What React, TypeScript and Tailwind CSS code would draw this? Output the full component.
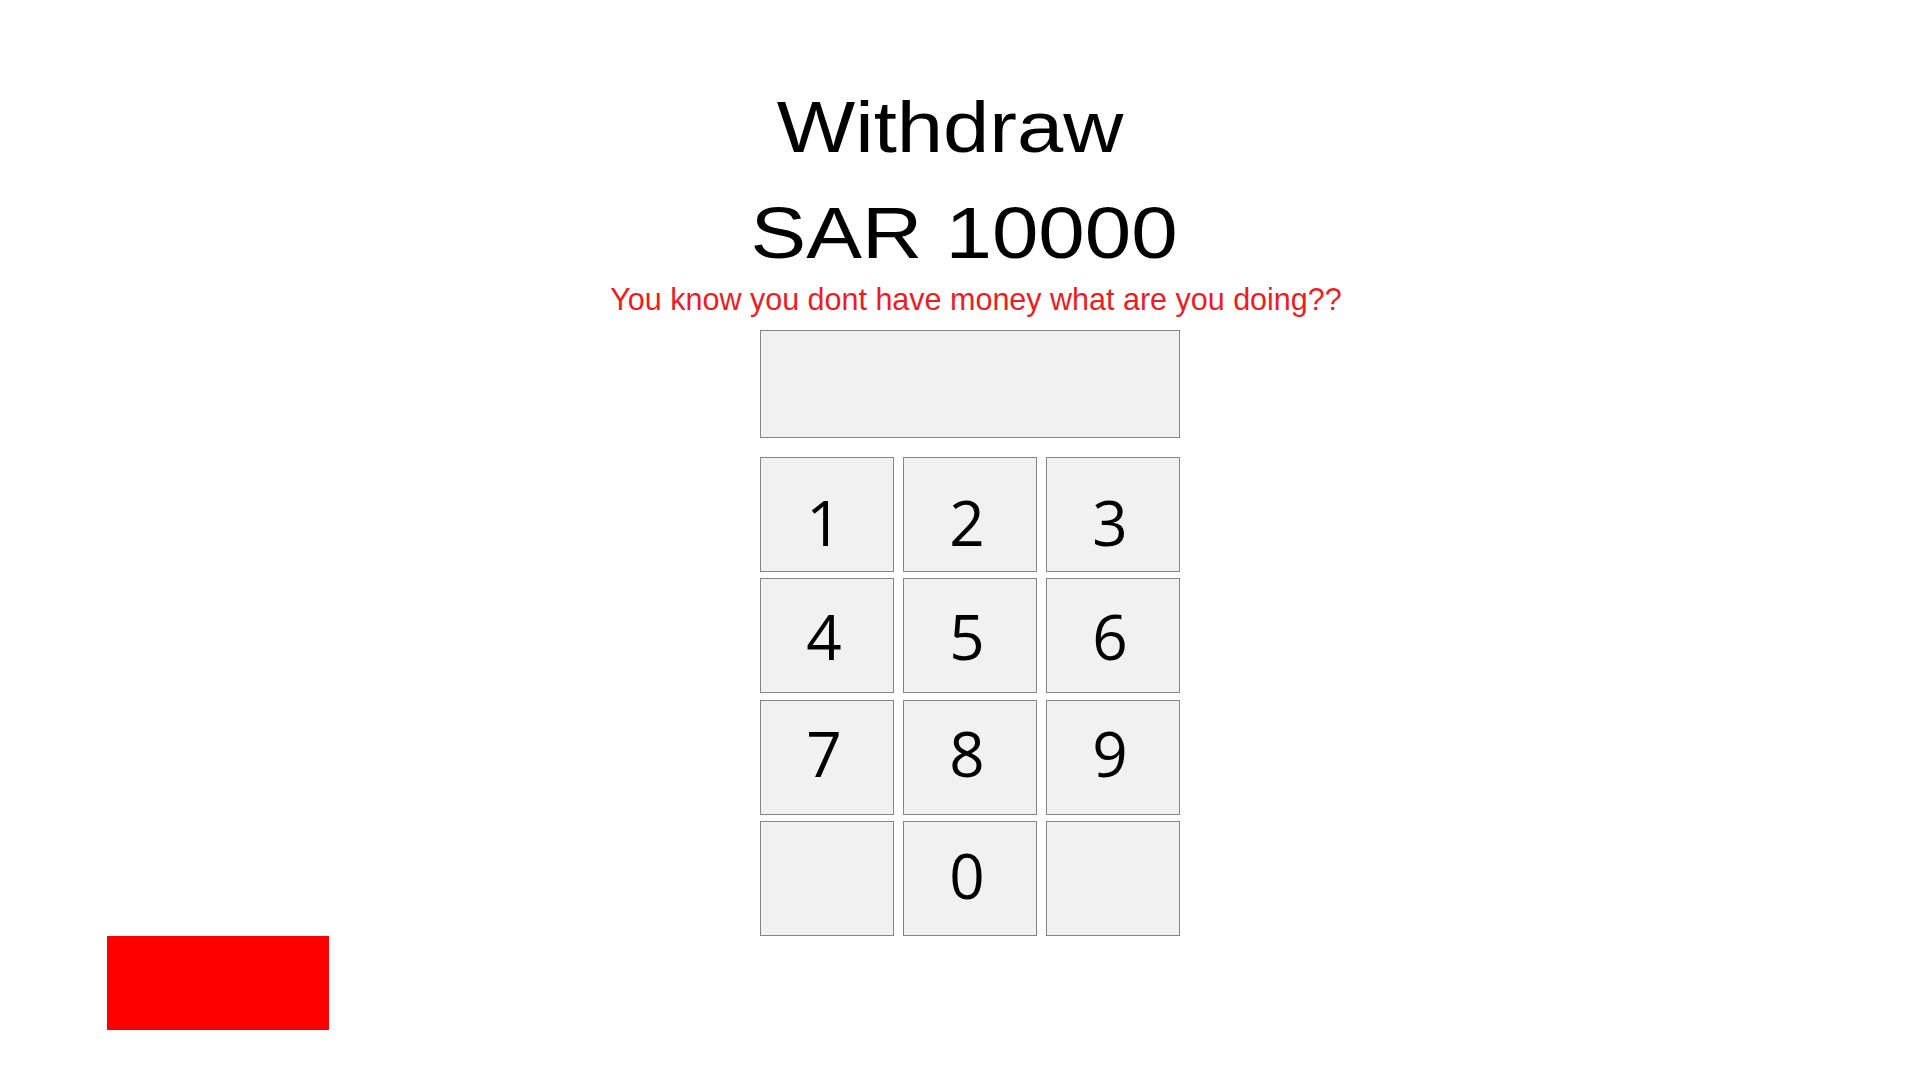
const rows = [
  { keys: ["1", "2", "3"], pad: "pt-[16px]" },
  { keys: ["4", "5", "6"], pad: "pt-0" },
  { keys: ["7", "8", "9"], pad: "pb-[8px]" },
  { keys: ["", "0", ""], pad: "pb-[8px]" },
];

function Key({ label, pad }: { label: string; pad: string }) {
  return (
    <button
      type="button"
      className={`flex h-[115px] items-center justify-center border border-[#858585] bg-[#f1f1f1] pr-[6px] text-[62px] leading-none text-black ${pad}`}
      style={{ fontFamily: '"Open Sans", "Noto Sans", sans-serif' }}
    >
      {label}
    </button>
  );
}

export default function App() {
  return (
    <div
      className="flex min-h-[1080px] w-full flex-col items-center bg-white pt-[91px]"
      style={{ fontFamily: '"Liberation Sans", Arial, sans-serif' }}
    >
      <h1 className="mr-[20px] scale-x-[1.155] text-[72px] font-normal leading-none text-black">
        Withdraw
      </h1>
      <h2 className="mt-[34px] ml-[8px] scale-x-[1.16] text-[72px] font-normal leading-none text-black">
        SAR 10000
      </h2>
      <p className="mt-[15px] ml-[32px] text-[30.5px] leading-none text-[#ec1c24]">
        You know you dont have money what are you doing??
      </p>

      <div className="ml-[20px] mt-[15px] flex w-[420px] flex-col">
        <div className="h-[108px] w-full border border-[#858585] bg-[#f1f1f1]" />
        <div className="mt-[19px] grid grid-cols-3 gap-x-[9px] gap-y-[6.5px]">
          {rows.map((row, r) =>
            row.keys.map((k, i) => <Key key={`${r}-${i}`} label={k} pad={row.pad} />)
          )}
        </div>
      </div>

      <div className="ml-[107px] h-[94px] w-[222px] self-start bg-[#ff0000]" />
    </div>
  );
}
